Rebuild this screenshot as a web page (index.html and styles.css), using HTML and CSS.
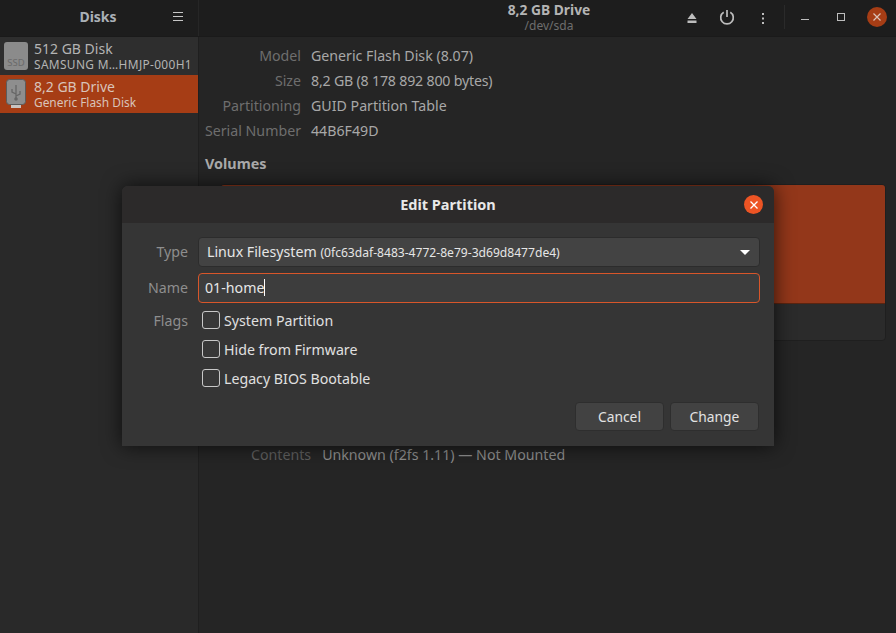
FILE: index.html

```html
<!DOCTYPE html>
<html lang="en">
<head>
    <meta charset="UTF-8">
    <title>Disks</title>
    <link rel="stylesheet" href="styles.css">
</head>
<body>
    <div class="app">
        <header class="topbar">
            <div class="topbar-left">
                <span class="app-title">Disks</span>
                <svg class="menu-icon" width="12" height="10" viewBox="0 0 12 10"><path d="M1 .5h10M1 4.5h10M1 8.5h10" stroke="#c6c6c6" fill="none"/></svg>
            </div>
            <div class="topbar-right">
                <div class="drive-title">
                    <strong>8,2 GB Drive</strong>
                    <span>/dev/sda</span>
                </div>
                <div class="actions">
                    <svg class="eject" width="10" height="10" viewBox="0 0 10 10"><path d="M5 0l4.500 6H.5zM.5 7.500h9V10h-9z" fill="#bdbdbd"/></svg>
                    <svg class="power" width="16" height="16" viewBox="0 0 16 16"><path d="M4.700 3.300a6.300 6.300 0 1 0 6.600 0M8 1v7" stroke="#bdbdbd" stroke-width="1.700" fill="none"/></svg>
                    <svg class="dots" width="4" height="12" viewBox="0 0 4 12"><path d="M1 1h2v2H1zM1 5.500h2v2H1zM1 10h2v2H1z" fill="#bdbdbd"/></svg>
                    <i class="divider"></i>
                    <svg class="win-min" width="10" height="8" viewBox="0 0 10 8"><path d="M1 7.500h8" stroke="#bdbdbd" fill="none"/></svg>
                    <svg class="win-max" width="9" height="9" viewBox="0 0 9 9"><rect x=".5" y=".5" width="7" height="7" stroke="#bdbdbd" fill="none"/></svg>
                    <span class="win-close">
                        <svg width="10" height="10" viewBox="0 0 10 10"><path d="M1.500 1.500l7 7M8.500 1.500l-7 7" stroke="#dcc4ba" stroke-width="1.200"/></svg>
                    </span>
                </div>
            </div>
        </header>

        <div class="content">
            <aside class="sidebar">
                <div class="disk-row">
                    <span class="ssd-icon">SSD</span>
                    <div class="disk-text">
                        <b>512 GB Disk</b>
                        <small class="caps">SAMSUNG M…HMJP-000H1</small>
                    </div>
                </div>
                <div class="disk-row selected">
                    <svg class="usb-icon" width="20" height="30" viewBox="0 0 20 30">
                        <rect x="5" y="24" width="10" height="5" fill="#c9c3c0"/>
                        <rect x=".5" y=".5" width="19" height="25" rx="3" fill="#8e8e8e" stroke="#5c5c5c"/>
                        <path d="M10 6v14M10 15l-4-2v-3M10 17l4-2v-3" stroke="#666" stroke-width="1.300" fill="none"/>
                        <circle cx="10" cy="20" r="1.800" fill="#666"/>
                    </svg>
                    <div class="disk-text">
                        <b>8,2 GB Drive</b>
                        <small>Generic Flash Disk</small>
                    </div>
                </div>
            </aside>

            <main class="main">
                <dl class="info">
                    <dt>Model</dt><dd>Generic Flash Disk (8.07)</dd>
                    <dt>Size</dt><dd class="tight">8,2 GB (8 178 892 800 bytes)</dd>
                    <dt>Partitioning</dt><dd>GUID Partition Table</dd>
                    <dt>Serial Number</dt><dd>44B6F49D</dd>
                </dl>
                <h3 class="volumes-title">Volumes</h3>
                <div class="volume-card">
                    <div class="volume-bar"></div>
                    <div class="volume-tools"></div>
                </div>
                <div class="contents-row">
                    <span>Contents</span>
                    <p>Unknown (f2fs 1.11) — Not Mounted</p>
                </div>
            </main>
        </div>

        <section class="dialog">
            <div class="dialog-head">
                <span>Edit Partition</span>
                <span class="dialog-close">
                    <svg width="10" height="10" viewBox="0 0 10 10"><path d="M1.500 1.500l7 7M8.500 1.500l-7 7" stroke="#fff" stroke-width="1.300"/></svg>
                </span>
            </div>
            <div class="dialog-body">
                <div class="form">
                    <label>Type</label>
                    <div class="combo">
                        <span>Linux Filesystem <small>(0fc63daf-8483-4772-8e79-3d69d8477de4)</small></span>
                        <i class="combo-arrow"></i>
                    </div>
                    <label>Name</label>
                    <div class="entry"><span>01-home</span><i class="caret"></i></div>
                    <label class="flags-label">Flags</label>
                    <div class="flags">
                        <div class="check"><i></i><span>System Partition</span></div>
                        <div class="check"><i></i><span>Hide from Firmware</span></div>
                        <div class="check"><i></i><span>Legacy BIOS Bootable</span></div>
                    </div>
                </div>
                <div class="buttons">
                    <button>Cancel</button>
                    <button>Change</button>
                </div>
            </div>
        </section>
    </div>
</body>
</html>
```

FILE: styles.css

```css
* { box-sizing: border-box; }
html, body { margin: 0; height: 100%; overflow: hidden; }
body { font-family: "Noto Sans", sans-serif; font-size: 14.2px; color: #c4c4c4; background: #252525; }

.app { position: relative; width: 896px; height: 633px; display: flex; flex-direction: column; }

/* header */
.topbar { height: 37px; flex: none; display: flex; background: #1d1d1d; border-bottom: 1px solid #1a1a1a; }
.topbar-left { width: 199px; flex: none; display: flex; align-items: center; padding-bottom: 4px; border-right: 1px solid #262626; position: relative; }
.app-title { width: 196px; text-align: center; font-weight: 700; font-size: 14px; color: #aab0b6; }
.menu-icon { position: absolute; left: 172px; top: 12px; }
.topbar-right { flex: 1; position: relative; display: flex; }
.drive-title { width: 700px; display: flex; flex-direction: column; align-items: center; line-height: 16px; padding-top: 2px; }
.drive-title strong { font-size: 13.8px; color: #b4b4b4; }
.drive-title span { font-size: 12px; color: #6e6e6e; }
.actions svg { position: absolute; }
.eject { left: 488px; top: 13px; }
.power { left: 520px; top: 9px; }
.dots { left: 562px; top: 12px; }
.divider { position: absolute; left: 585px; top: 5px; height: 24px; width: 1px; background: #2a2a2a; }
.win-min { left: 601px; top: 12px; }
.win-max { left: 638px; top: 13px; }
.win-close { position: absolute; left: 668px; top: 7px; width: 20px; height: 20px; border-radius: 50%; background: #a63d15; display: flex; align-items: center; justify-content: center; }
.win-close svg { position: static; }

.content { flex: 1; display: flex; min-height: 0; }

/* sidebar */
.sidebar { width: 199px; flex: none; background: #292929; border-right: 1px solid #1f1f1f; }
.disk-row { height: 38px; display: flex; align-items: center; padding-left: 4px; gap: 6px; background: #2e2e2e; }
.disk-row.selected { background: #a63d15; color: #d8c5bc; }
.ssd-icon { width: 24px; height: 28px; flex: none; border-radius: 3px; background: #8b8b8b; color: #6a6a6a; font-size: 9.500px; text-align: center; padding-top: 16px; line-height: 10px; }
.usb-icon { flex: none; margin: 0 2px 0 2px; width: 20px; height: 30px; }
.disk-text { display: flex; flex-direction: column; line-height: 16px; }
.disk-text b { font-weight: 400; font-size: 14px; color: #b4b4b4; padding-top: 1px; }
.disk-text small { font-size: 11.900px; color: #b4b4b4; white-space: nowrap; margin-top: -1px; }
.disk-text .caps { letter-spacing: .35px; }
.selected .disk-text b, .selected .disk-text small { color: #d9c4ba; }

/* main panel */
.main { flex: 1; padding-top: 6px; position: relative; }
.info { margin: 0; display: grid; grid-template-columns: 102px 1fr; column-gap: 10px; grid-auto-rows: 25px; line-height: 25px; }
.info dt { text-align: right; color: #6e6e6e; white-space: nowrap; }
.info dd { margin: 0; color: #a8a8a8; }
.info .tight { letter-spacing: -.2px; }
.volumes-title { margin: 9px 0 0 6px; font-size: 14.400px; line-height: 24px; color: #aaaaaa; font-weight: 700; }
.volume-card { margin: 8px 10px 0 21px; height: 157px; border-radius: 4px; background: #2b2b2b; border: 1px solid #1f1f1f; overflow: hidden; }
.volume-bar { height: 119px; background: #93371a; border-bottom: 1px solid #5a2410; }
.contents-row { margin-top: 102px; margin-left: 52px; display: flex; gap: 11px; line-height: 24px; }
.contents-row span { color: #5f5f5f; }
.contents-row p { margin: 0; color: #8f8f8f; }

/* dialog */
.dialog { position: absolute; left: 122px; top: 186px; width: 652px; height: 260px; border-radius: 6px 6px 0 0; background: #353535; box-shadow: 0 0 20px rgba(0,0,0,.7); display: flex; flex-direction: column; }
.dialog-head { height: 37px; flex: none; position: relative; background: #2c2a2a; border-radius: 6px 6px 0 0; display: flex; align-items: center; justify-content: center; padding-bottom: 2px; font-weight: 700; font-size: 14.500px; color: #e8e8e8; }
.dialog-close { position: absolute; left: 622px; top: 9px; width: 19px; height: 19px; border-radius: 50%; background: #ed5424; display: flex; align-items: center; justify-content: center; }
.dialog-body { flex: 1; padding: 14px 14px 15px 0; display: flex; flex-direction: column; justify-content: space-between; }
.form { display: grid; grid-template-columns: 66px 1fr; column-gap: 10px; row-gap: 6px; align-items: center; }
.form label { text-align: right; color: #8e8e8e; padding-bottom: 2px; }
.form .flags-label { align-self: start; line-height: 22px; padding: 1px 0 0; }
.combo, .entry { height: 30px; border-radius: 4px; display: flex; align-items: center; padding-bottom: 2px; color: #e6e6e6; }
.combo { background: #434343; border: 1px solid #2c2c2c; justify-content: space-between; padding-left: 8px; padding-right: 9px; }
.combo small { font-size: 12.100px; }
.combo-arrow { width: 0; height: 0; margin-top: 2px; border: 5px solid transparent; border-top: 5px solid #fff; border-bottom: 0; }
.entry { background: #3d3d3d; border: 1px solid #d8562a; color: #e6e6e6; padding-left: 6px; padding-right: 6px; }
.caret { width: 1px; height: 17px; background: #fff; }
.flags { display: flex; flex-direction: column; gap: 7px; padding-left: 4px; }
.check { height: 22px; display: flex; align-items: center; gap: 4px; color: #e0e0e0; }
.check span { padding-top: 1px; }
.check i { width: 18px; height: 18px; border: 1px solid #c8c8c8; border-radius: 3px; background: #383838; }
.buttons { display: flex; justify-content: flex-end; gap: 6px; margin-right: 1px; }
.buttons button { width: 89px; height: 29px; border: 1px solid #2e2e2e; border-radius: 4px; background: #424242; color: #e2e2e2; font: 13.800px "Noto Sans", sans-serif; }
```
